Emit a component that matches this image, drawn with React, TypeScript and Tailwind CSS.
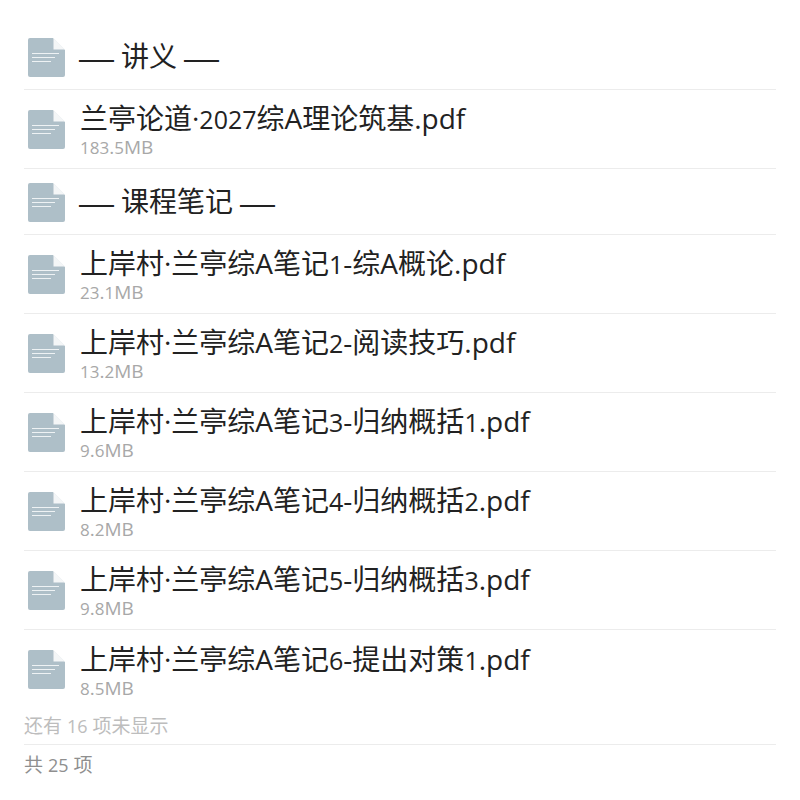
const files = [
  { name: '上岸村·兰亭综A笔记1-综A概论.pdf', size: '23.1MB' },
  { name: '上岸村·兰亭综A笔记2-阅读技巧.pdf', size: '13.2MB' },
  { name: '上岸村·兰亭综A笔记3-归纳概括1.pdf', size: '9.6MB' },
  { name: '上岸村·兰亭综A笔记4-归纳概括2.pdf', size: '8.2MB' },
  { name: '上岸村·兰亭综A笔记5-归纳概括3.pdf', size: '9.8MB' },
];

function FileIcon() {
  return (
    <svg width="37" height="39" viewBox="0 0 37 39" className="shrink-0">
      <path d="M2 0H25L37 12V37a2 2 0 0 1-2 2H2a2 2 0 0 1-2-2V2a2 2 0 0 1 2-2Z" fill="#aebfc8" />
      <path d="M25.5 0L37 11.5H25.5Z" fill="#f4f6f7" />
      <path d="M4 15.5H31M4 19.5H27M4 23.5H23" stroke="#eef2f4" strokeWidth="1" fill="none" />
    </svg>
  );
}

// digits run narrower than the letters around them
function Digits({ text, size }: { text: string; size: string }) {
  return (
    <>
      {text.split(/(\d+)/).map((part, i) =>
        i % 2 ? (
          <span key={i} className={size}>
            {part}
          </span>
        ) : (
          part
        ),
      )}
    </>
  );
}

function Heading({ title }: { title: string }) {
  return (
    <div className="flex h-[66px] items-center border-b border-[#ececec] pl-1 pt-[2px]">
      <FileIcon />
      <span className="ml-3 flex items-center gap-[5px] text-[28px] leading-9 text-[#222]">
        <span className="mb-2 font-['Noto_Sans_CJK_SC'] text-[44px] font-light leading-none">—</span>
        <span className="mb-[3px]">{title}</span>
        <span className="mb-2 font-['Noto_Sans_CJK_SC'] text-[44px] font-light leading-none">—</span>
      </span>
    </div>
  );
}

function FileRow({ name, size, last }: { name: string; size: string; last?: boolean }) {
  return (
    <div className={`flex h-[79px] items-center pl-1 ${last ? '' : 'border-b border-[#ececec]'}`}>
      <FileIcon />
      <div className="ml-[15px] flex flex-col pt-[2px]">
        <span className="text-[28px] leading-[34px] text-[#222]">
          <Digits text={name} size="text-[25px]" />
        </span>
        <span className="text-[19px] leading-[22px] text-[#a8a8a8]">
          <Digits text={size} size="text-[17px]" />
        </span>
      </div>
    </div>
  );
}

export default function App() {
  return (
    <div className="h-[800px] w-[800px] overflow-hidden bg-white px-6 pt-6 font-['Open_Sans','Noto_Sans_CJK_SC',sans-serif]">
      <Heading title="讲义" />
      <FileRow name="兰亭论道·2027综A理论筑基.pdf" size="183.5MB" />
      <Heading title="课程笔记" />
      {files.map((f) => (
        <FileRow key={f.name} name={f.name} size={f.size} />
      ))}
      <FileRow name="上岸村·兰亭综A笔记6-提出对策1.pdf" size="8.5MB" last />
      <div className="flex h-9 items-center border-b border-[#ececec] text-[19px] text-[#bdbdbd]">
        <span>
          <Digits text="还有 16 项未显示" size="text-[18px]" />
        </span>
      </div>
      <div className="flex h-10 items-center text-[19px] text-[#8f8f8f]">
        <span>
          <Digits text="共 25 项" size="text-[18px]" />
        </span>
      </div>
    </div>
  );
}
